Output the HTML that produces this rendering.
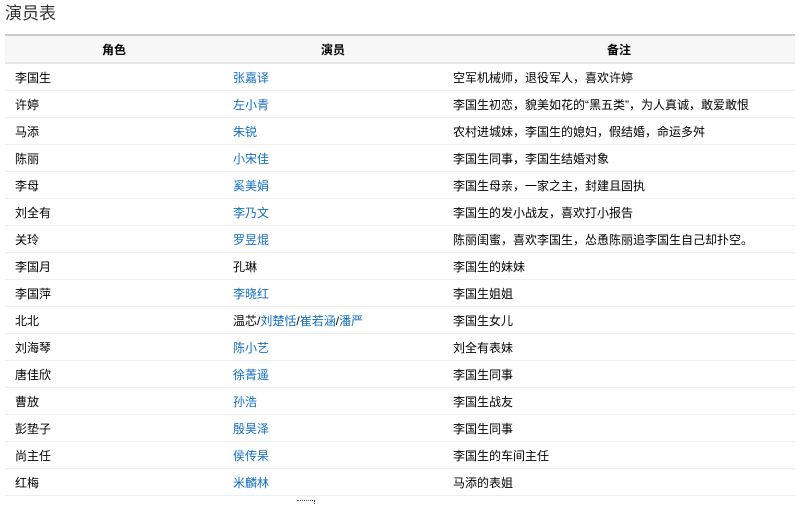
<!DOCTYPE html>
<html><head><meta charset="utf-8"><style>
body{margin:0;background:#fff;font-family:"Liberation Sans","Noto Sans CJK SC","WenQuanYi Zen Hei",sans-serif;font-size:12px;color:#000;}
h2{position:absolute;left:5px;top:2px;margin:0;font-size:17px;font-weight:normal;color:#333;line-height:24px;}
table{position:absolute;left:5px;top:34px;width:790px;border-collapse:collapse;border-top:2px solid #ccc;}
th{background:#f7f7f7;height:26px;font-weight:bold;text-align:center;border-bottom:2px solid #e6e6e6;padding:0;}
td{height:26px;border-bottom:1px solid #eee;padding:0 0 0 10px;}
a{color:#136ec2;text-decoration:none;}
.dots{position:absolute;left:297px;top:500px;width:17px;height:3px;border-top:1px dotted #555;border-right:1px dotted #555;}
</style></head><body>
<h2>演员表</h2>
<table>
<colgroup><col style="width:218px"><col style="width:220px"><col></colgroup>
<tr><th>角色</th><th>演员</th><th>备注</th></tr>
<tr><td>李国生</td><td><a>张嘉译</a></td><td>空军机械师，退役军人，喜欢许婷</td></tr>
<tr><td>许婷</td><td><a>左小青</a></td><td>李国生初恋，貌美如花的“黑五类”，为人真诚，敢爱敢恨</td></tr>
<tr><td>马添</td><td><a>朱锐</a></td><td>农村进城妹，李国生的媳妇，假结婚，命运多舛</td></tr>
<tr><td>陈丽</td><td><a>小宋佳</a></td><td>李国生同事，李国生结婚对象</td></tr>
<tr><td>李母</td><td><a>奚美娟</a></td><td>李国生母亲，一家之主，封建且固执</td></tr>
<tr><td>刘全有</td><td><a>李乃文</a></td><td>李国生的发小战友，喜欢打小报告</td></tr>
<tr><td>关玲</td><td><a>罗昱焜</a></td><td>陈丽闺蜜，喜欢李国生，怂恿陈丽追李国生自己却扑空。</td></tr>
<tr><td>李国月</td><td>孔琳</td><td>李国生的妹妹</td></tr>
<tr><td>李国萍</td><td><a>李晓红</a></td><td>李国生姐姐</td></tr>
<tr><td>北北</td><td>温芯/<a>刘楚恬</a>/<a>崔若涵</a>/<a>潘严</a></td><td>李国生女儿</td></tr>
<tr><td>刘海琴</td><td><a>陈小艺</a></td><td>刘全有表妹</td></tr>
<tr><td>唐佳欣</td><td><a>徐菁遥</a></td><td>李国生同事</td></tr>
<tr><td>曹放</td><td><a>孙浩</a></td><td>李国生战友</td></tr>
<tr><td>彭垫子</td><td><a>殷昊泽</a></td><td>李国生同事</td></tr>
<tr><td>尚主任</td><td><a>侯传杲</a></td><td>李国生的车间主任</td></tr>
<tr><td>红梅</td><td><a>米麟林</a></td><td>马添的表姐</td></tr>
</table>
<div class="dots"></div>
</body></html>
